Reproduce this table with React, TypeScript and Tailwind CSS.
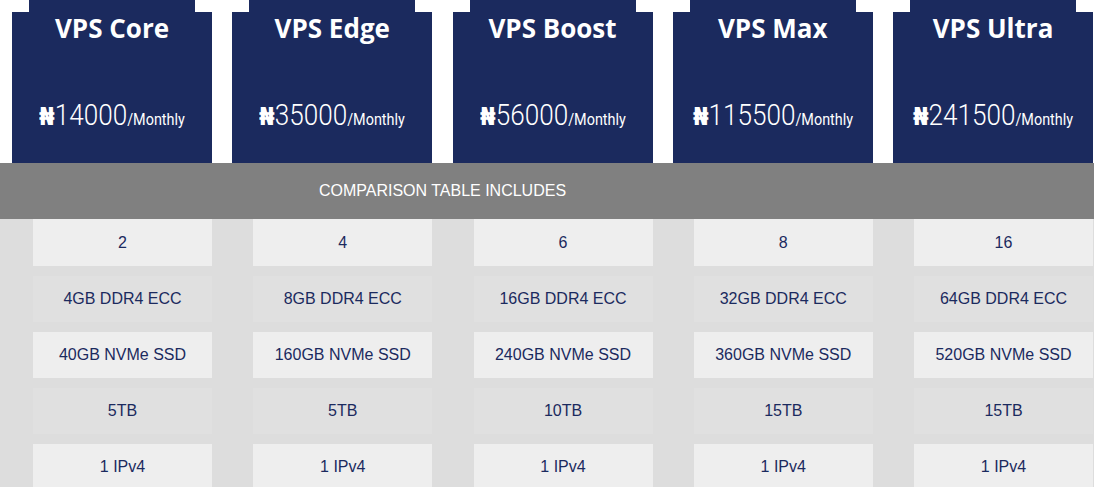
import React from "react";

const plans = [
  { name: "VPS Core", price: "14000" },
  { name: "VPS Edge", price: "35000" },
  { name: "VPS Boost", price: "56000" },
  { name: "VPS Max", price: "115500" },
  { name: "VPS Ultra", price: "241500" },
];

const rows = [
  ["2", "4", "6", "8", "16"],
  ["4GB DDR4 ECC", "8GB DDR4 ECC", "16GB DDR4 ECC", "32GB DDR4 ECC", "64GB DDR4 ECC"],
  ["40GB NVMe SSD", "160GB NVMe SSD", "240GB NVMe SSD", "360GB NVMe SSD", "520GB NVMe SSD"],
  ["5TB", "5TB", "10TB", "15TB", "15TB"],
  ["1 IPv4", "1 IPv4", "1 IPv4", "1 IPv4", "1 IPv4"],
];

function PlanCard({ name, price }: { name: string; price: string }) {
  return (
    <div className="flex flex-col">
      <div className="mx-auto h-[12px] w-[166px] bg-[#1b2a5e]" />
      <div className="flex h-[151px] flex-col items-center bg-[#1b2a5e] text-white">
        <h3 className="font-['Open_Sans',sans-serif] text-[26px] font-bold leading-[32px]">{name}</h3>
        <div className="mt-[57px] flex scale-x-[0.9] items-baseline whitespace-nowrap leading-none">
          <span className="font-['DejaVu_Sans',sans-serif] text-[25px] font-bold">₦</span>
          <span className="font-['Roboto',sans-serif] text-[29px] font-light">{price}</span>
          <span className="font-['Roboto',sans-serif] text-[16px]">/Monthly</span>
        </div>
      </div>
    </div>
  );
}

export default function App() {
  return (
    <div className="h-[487px] w-[1094px] overflow-hidden bg-white font-['Liberation_Sans',Arial,sans-serif]">
      <div className="grid grid-cols-5 gap-x-[20.25px] pl-[12px] pr-[1px]">
        {plans.map((p) => (
          <PlanCard key={p.name} {...p} />
        ))}
      </div>

      <div className="flex h-[56px] items-center bg-[#808080]">
        <div className="w-[885px] text-center text-[16px] text-white">COMPARISON TABLE INCLUDES</div>
      </div>

      <div className="bg-[#dddddd] pb-[10px]">
        {rows.map((row, i) => (
          <div
            key={i}
            className={
              "grid grid-cols-5 gap-x-[20.25px] pl-[12px] pr-[1px] " +
              (i === 0 ? "" : "mt-[10px]")
            }
          >
            {row.map((v, j) => (
              <div
                key={j}
                className={
                  "ml-[21px] flex items-center justify-center text-[16px] text-[#1b2a5e] " +
                  (i === 0 ? "h-[47px] " : "h-[46px] ") +
                  (i % 2 === 0 ? "bg-[#eeeeee]" : "bg-[#e0e0e0]")
                }
              >
                {v}
              </div>
            ))}
          </div>
        ))}
      </div>
    </div>
  );
}
